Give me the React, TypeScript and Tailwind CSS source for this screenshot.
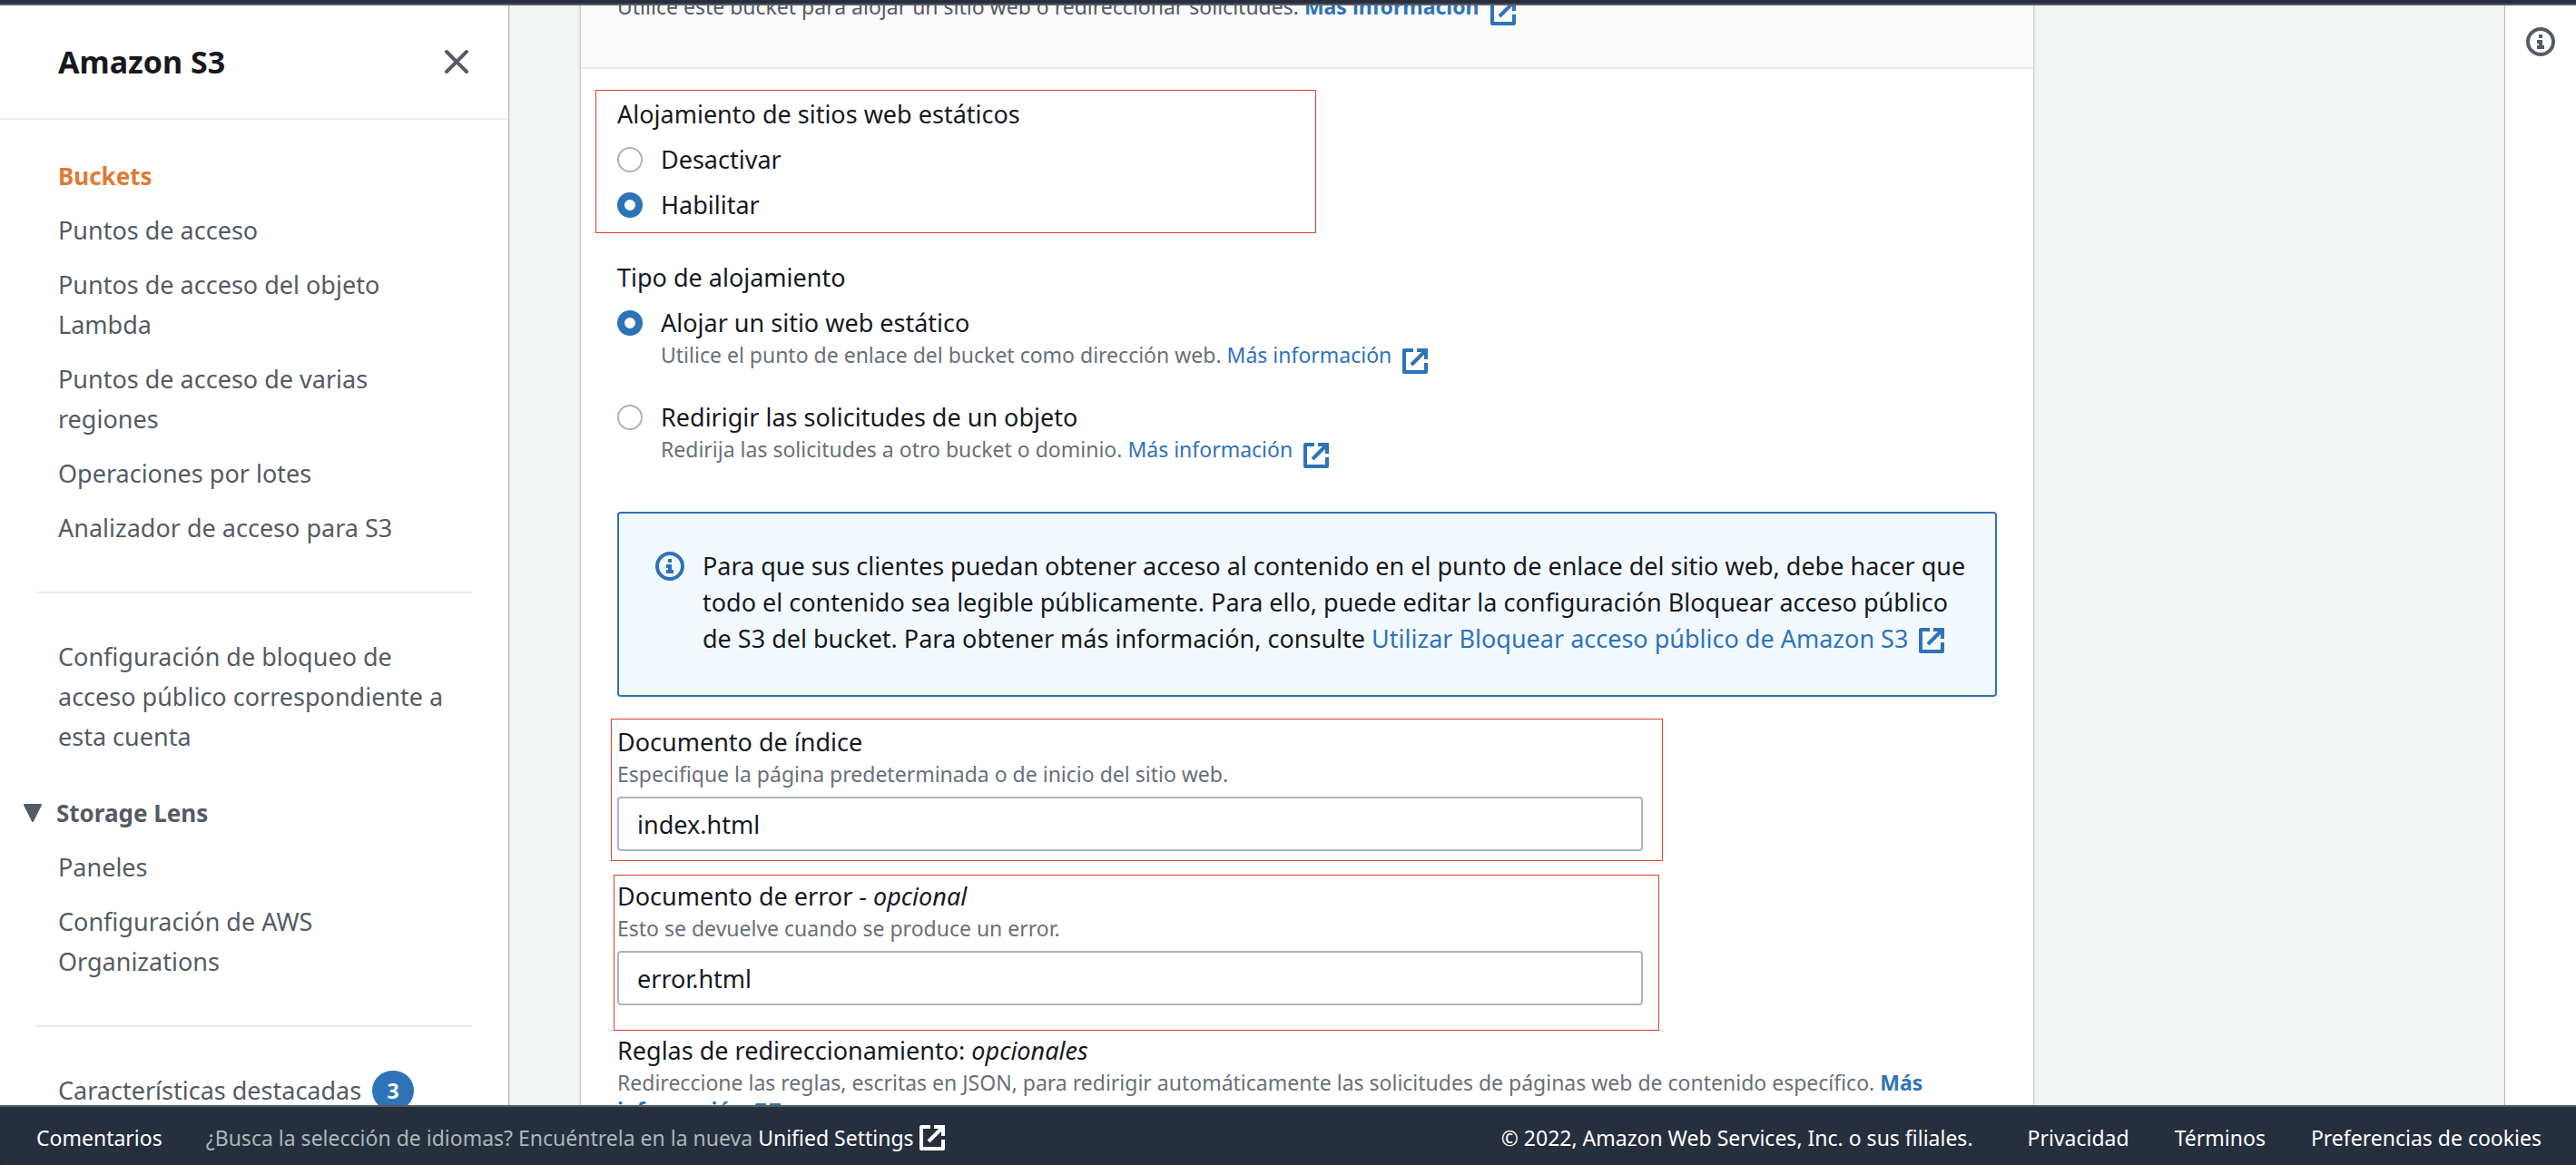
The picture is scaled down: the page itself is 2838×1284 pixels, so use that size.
import React, { useState } from "react";
import type { ReactNode } from "react";

function ExternalIcon({ className = "" }: { className?: string }) {
  return (
    <svg viewBox="0 0 28 28" fill="none" stroke="currentColor" strokeWidth="4" className={`inline-block size-7 shrink-0 ${className}`} aria-hidden="true">
      <path d="M12 2H2V26H26V16" strokeLinejoin="round" />
      <path d="M16 2H26V12" />
      <path d="M26 2L10 18" />
    </svg>
  );
}

function InfoIcon({ className = "" }: { className?: string }) {
  return (
    <svg viewBox="0 0 32 32" fill="none" className={`size-8 shrink-0 ${className}`} aria-hidden="true">
      <circle cx="16" cy="16" r="14" stroke="currentColor" strokeWidth="4" />
      <path fill="currentColor" d="M14 8h4v4h-4zM12 14h6v6h2v4h-8v-4h2v-2h-2z" />
    </svg>
  );
}

function MoreInfo({ bold = false }: { bold?: boolean }) {
  return (
    <a href="#mas-informacion" className={bold ? "font-bold text-[#2e73b8]" : "text-[#2e73b8]"}>
      Más información
      <ExternalIcon className="-my-2 ml-3 align-[-4px]" />
    </a>
  );
}

function NavLink({ children, active = false }: { children: ReactNode; active?: boolean }) {
  return (
    <li>
      <a href="#nav" className={active ? "block text-[26px] font-bold text-[#df7a33]" : "block"}>
        {children}
      </a>
    </li>
  );
}

function Sidebar() {
  return (
    <aside className="z-10 w-[560px] shrink-0 overflow-hidden bg-white text-[27px] leading-11 text-[#545b64] shadow-[1px_0_1px_0_#b4b9ba]">
      <div className="flex h-[126px] items-center justify-between border-b-2 border-[#ebebeb] pr-[43px] pl-16">
        <h2 className="text-[34px] font-bold text-[#16191f]">Amazon S3</h2>
        <button type="button" aria-label="Cerrar">
          <svg viewBox="0 0 28 28" className="size-7" fill="none" stroke="currentColor" strokeWidth="4" strokeLinecap="round">
            <path d="M3 3L25 25M25 3L3 25" />
          </svg>
        </button>
      </div>
      <nav className="pt-10">
        <ul className="flex flex-col gap-4 pr-15 pl-16">
          <NavLink active>Buckets</NavLink>
          <NavLink>Puntos de acceso</NavLink>
          <NavLink>Puntos de acceso del objeto Lambda</NavLink>
          <NavLink>Puntos de acceso de varias regiones</NavLink>
          <NavLink>Operaciones por lotes</NavLink>
          <NavLink>Analizador de acceso para S3</NavLink>
        </ul>
        <hr className="mx-10 my-12 border-t-2 border-[#ebebeb]" />
        <ul className="pr-15 pl-16">
          <NavLink>Configuración de bloqueo de acceso público correspondiente a esta cuenta</NavLink>
        </ul>
        <button type="button" aria-expanded="true" className="mt-10 flex items-center gap-4 pl-[26px] text-[26px] font-bold">
          <svg viewBox="0 0 20 20" className="size-5" fill="currentColor" stroke="currentColor" strokeWidth="2" strokeLinejoin="round">
            <path d="M1 1H19L10 19Z" />
          </svg>
          Storage Lens
        </button>
        <ul className="mt-4 flex flex-col gap-4 pr-15 pl-16">
          <NavLink>Paneles</NavLink>
          <NavLink>Configuración de AWS Organizations</NavLink>
        </ul>
        <hr className="mx-10 my-12 border-t-2 border-[#ebebeb]" />
        <a href="#nav" className="flex items-center gap-3 pl-16">
          Características destacadas
          <span className="flex h-11 w-[46px] items-center justify-center rounded-full bg-[#2e73b8] text-[23px] font-bold text-white">3</span>
        </a>
      </nav>
    </aside>
  );
}

function RadioOption({ name, label, checked, onSelect, children }: { name: string; label: string; checked: boolean; onSelect: () => void; children?: ReactNode }) {
  return (
    <div>
      <label className="flex items-center gap-5">
        <input
          type="radio"
          name={name}
          checked={checked}
          onChange={onSelect}
          className="size-7 appearance-none rounded-full border-2 border-[#aab7b8] bg-white checked:border-8 checked:border-[#2e73b8]"
        />
        {label}
      </label>
      {children && <p className="pl-12 text-[23px] leading-[30px] text-[#687078]">{children}</p>}
    </div>
  );
}

function TextField({ id, label, hint, value }: { id: string; label: ReactNode; hint: string; value: string }) {
  return (
    <>
      <label htmlFor={id} className="block">{label}</label>
      <p className="text-[23px] leading-[30px] text-[#687078]">{hint}</p>
      <input
        id={id}
        type="text"
        defaultValue={value}
        className="mt-[10px] block h-15 w-full max-w-[1130px] rounded-sm border-2 border-[#aab7b8] bg-white px-5"
      />
    </>
  );
}

function HostingCard() {
  const [hosting, setHosting] = useState("enable");
  const [kind, setKind] = useState("static");
  return (
    <section className="-mt-[14px] min-h-[1300px] max-w-[1600px] bg-white text-[27px] leading-10 text-[#16191f] shadow-[0_0_2px_1px_#bfc4c5]">
      <header className="border-b-2 border-[#ebebeb] bg-[#fafafa] px-10 pb-[52px] text-[23px] leading-[30px] text-[#545b64]">
        Utilice este bucket para alojar un sitio web o redireccionar solicitudes. <MoreInfo bold />
      </header>

      <fieldset className="mt-[23px] ml-4 flex max-w-[794px] flex-col gap-[10px] border border-[#d9432b] px-[23px] pt-[6px] pb-[10px]">
        <legend className="float-left">Alojamiento de sitios web estáticos</legend>
        <RadioOption name="hosting" label="Desactivar" checked={hosting === "disable"} onSelect={() => setHosting("disable")} />
        <RadioOption name="hosting" label="Habilitar" checked={hosting === "enable"} onSelect={() => setHosting("enable")} />
      </fieldset>

      <fieldset className="mx-10 mt-[29px] flex flex-col">
        <legend className="mb-[10px]">Tipo de alojamiento</legend>
        <div className="flex flex-col gap-[34px]">
          <RadioOption name="kind" label="Alojar un sitio web estático" checked={kind === "static"} onSelect={() => setKind("static")}>
            Utilice el punto de enlace del bucket como dirección web. <MoreInfo />
          </RadioOption>
          <RadioOption name="kind" label="Redirigir las solicitudes de un objeto" checked={kind === "redirect"} onSelect={() => setKind("redirect")}>
            Redirija las solicitudes a otro bucket o dominio. <MoreInfo />
          </RadioOption>
        </div>
      </fieldset>

      <div role="note" className="mx-10 mt-[54px] flex gap-5 rounded-sm border-2 border-[#2e73b8] bg-[#f2f9fd] pt-[38px] pr-7 pb-[42px] pl-10">
        <InfoIcon className="mt-1 text-[#2e73b8]" />
        <p>
          Para que sus clientes puedan obtener acceso al contenido en el punto de enlace del sitio web, debe hacer que todo el contenido sea legible públicamente. Para ello, puede editar la configuración Bloquear acceso público de S3 del bucket. Para obtener más información, consulte{" "}
          <a href="#bloquear" className="text-[#2e73b8]">
            Utilizar Bloquear acceso público de Amazon S3
            <ExternalIcon className="ml-3 align-[-6px]" />
          </a>
        </p>
      </div>

      <div className="mt-6 ml-[33px] max-w-[1159px] border border-[#d9432b] pt-[5px] pb-[10px] pl-[6px]">
        <TextField id="index-document" label="Documento de índice" hint="Especifique la página predeterminada o de inicio del sitio web." value="index.html" />
      </div>

      <div className="mt-[15px] ml-9 max-w-[1152px] border border-[#d9432b] pt-[3px] pb-[27px] pl-[3px]">
        <TextField id="error-document" label={<>Documento de error - <em>opcional</em></>} hint="Esto se devuelve cuando se produce un error." value="error.html" />
      </div>

      <div className="mx-10 mt-[2px]">
        <h3>Reglas de redireccionamiento: <em>opcionales</em></h3>
        <p className="text-[23px] leading-[30px] text-[#687078]">
          Redireccione las reglas, escritas en JSON, para redirigir automáticamente las solicitudes de páginas web de contenido específico. <MoreInfo bold />
        </p>
      </div>
    </section>
  );
}

export default function App() {
  return (
    <div className="flex h-screen flex-col overflow-hidden bg-[#2b2b2b] font-['Noto_Sans','Open_Sans',sans-serif]">
      <div className="h-[6px] shrink-0 border-b-2 border-[#5a5b66] bg-[#262f3d]" />
      <div className="flex min-h-0 flex-1 overflow-hidden bg-[#f2f3f3]">
        <Sidebar />
        <main className="min-w-0 flex-1 overflow-hidden px-20">
          <HostingCard />
        </main>
        <aside className="flex w-[78px] shrink-0 justify-center bg-white pt-6 text-[#545b64] shadow-[-1px_0_1px_0_#b4b9ba]">
          <button type="button" aria-label="Información" className="size-8">
            <InfoIcon />
          </button>
        </aside>
      </div>
      <footer className="flex h-[66px] shrink-0 items-center justify-between rounded-bl-md border-t-2 border-[#545b64] bg-[#262f3d] pt-1 pr-[38px] pl-10 text-[23px] text-white">
        <div className="flex items-center gap-12">
          <a href="#comentarios">Comentarios</a>
          <p className="flex items-center gap-[6px] text-[#aab7b8]">
            ¿Busca la selección de idiomas? Encuéntrela en la nueva
            <a href="#settings" className="flex items-center gap-[6px] text-white">
              Unified Settings
              <ExternalIcon />
            </a>
          </p>
        </div>
        <div className="flex items-center gap-[50px]">
          <span className="mr-[10px]">© 2022, Amazon Web Services, Inc. o sus filiales.</span>
          <a href="#privacidad">Privacidad</a>
          <a href="#terminos">Términos</a>
          <a href="#cookies">Preferencias de cookies</a>
        </div>
      </footer>
    </div>
  );
}
